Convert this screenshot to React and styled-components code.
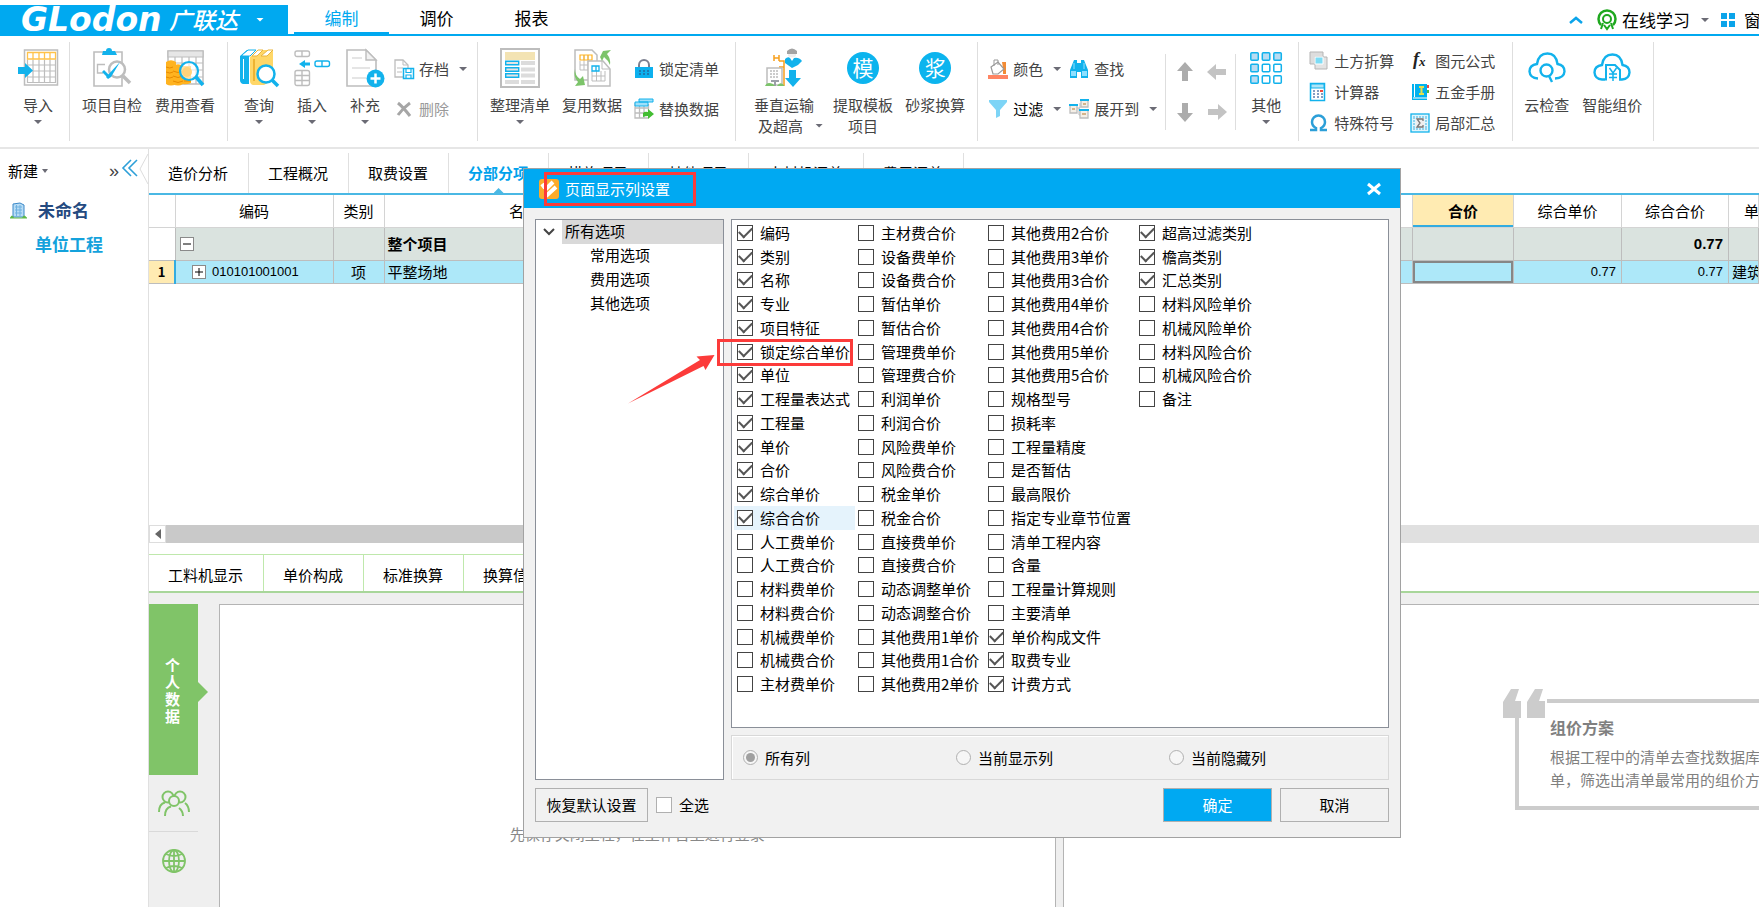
import React from 'react'

import styled, { createGlobalStyle } from 'styled-components';

const GlobalStyle = createGlobalStyle`
    * {
        box-sizing: border-box;
    }
    body {
        margin: 0;
        overflow: hidden;
        background: #fff;
        color: #000;
        font: 15px/20px 'Noto Sans CJK SC', 'Liberation Sans', sans-serif;
    }
    button, input {
        margin: 0;
        padding: 0;
        border: 0;
        background: none;
        color: inherit;
        font: inherit;
    }
    svg {
        display: block;
        flex: none;
        overflow: visible;
    }
`

const Page = styled.div`
    display: flex;
    flex-direction: column;
    height: 100vh;
    overflow: hidden;
`

/* ---------- header ---------- */

const Header = styled.header`
    display: flex;
    flex: none;
    height: 36px;
    border-bottom: 2px solid #00a9f0;
`

const Logo = styled.button`
    display: flex;
    align-items: center;
    width: 288px;
    margin: 5px 6px 0 0;
    padding-left: 21px;
    background: #00a9f0;
    color: #fff;
`

const Brand = styled.span`
    width: 148px;
    font: italic bold 33px/29px 'DejaVu Sans', sans-serif;
    text-align: left;
`

const BrandName = styled.span`
    width: 87px;
    font-size: 23px;
    font-style: italic;
    font-weight: 500;
    line-height: 29px;
    text-align: left;
`

const MenuTab = styled.button`
    width: 95px;
    padding-top: 4px;
    border-bottom: 2px solid ${({ $active }) => ($active ? '#00a9f0' : 'transparent')};
    color: ${({ $active }) => ($active ? '#00a9f0' : '#000')};
    font-size: 17px;
`

const Caret = styled.span`
    flex: none;
    width: 8px;
    height: 4px;
    background: ${({ $color }) => $color || '#6b6b75'};
    clip-path: polygon(0 0, 100% 0, 50% 100%);
`

const HeaderTools = styled.div`
    display: flex;
    align-items: center;
    width: 190px;
    margin-left: auto;
    padding-top: 6px;
    overflow: hidden;
    font-size: 17px;
    white-space: nowrap;
`

const HeaderButton = styled.button`
    display: flex;
    flex: none;
    align-items: center;
    gap: ${({ $gap }) => $gap || 5}px;
    margin-right: ${({ $after }) => $after || 0}px;

    ${Caret} {
        margin-left: 6px;
    }
`

/* ---------- ribbon ---------- */

const Ribbon = styled.nav`
    display: flex;
    flex: none;
    height: 113px;
    border-bottom: 2px solid #e6e6e6;
    color: #444;
`

const Group = styled.div`
    display: flex;
    flex: none;
    gap: ${({ $gap }) => $gap || 0}px;
    margin: 6px 0;
    padding: 0 ${({ $right }) => $right}px 0 ${({ $left }) => $left}px;
    border-right: 1px solid #dedede;
`

const BigButton = styled.button`
    display: flex;
    flex-direction: column;
    align-items: center;
    min-width: ${({ $width }) => $width || 0}px;
    padding: 6px ${({ $right }) => $right || 0}px 0 0;
    line-height: 21px;
    white-space: nowrap;
`

const IconBox = styled.span`
    display: flex;
    align-items: center;
    justify-content: center;
    height: 40px;
    margin-bottom: 6px;
`

const LabelLine = styled.span`
    display: flex;
    align-items: center;
    gap: 12px;
    width: 60px;
    padding-left: 4px;
`

const ArrowBelow = styled(Caret)`
    margin-top: 5px;
`

const Stack = styled.div`
    display: flex;
    flex-direction: column;
    padding-top: ${({ $rowHeight }) => ($rowHeight === 40 ? 7 : 3)}px;

    > button {
        height: ${({ $rowHeight }) => $rowHeight}px;
    }
`

const SmallButton = styled.button`
    display: flex;
    align-items: center;
    gap: 5px;
    color: ${({ $color }) => $color || 'inherit'};
    white-space: nowrap;

    > svg {
        width: 20px;
        height: 20px;
    }
    ${Caret} {
        margin-left: 5px;
    }
`

const MovePad = styled.div`
    display: grid;
    grid-template-columns: 32px 32px;
    grid-template-rows: 40px 40px;
    align-content: center;
    justify-content: center;
    width: 71px;
    height: 76px;
    margin-top: 12px;
    border: solid #dedede;
    border-width: 0 1px;

    button {
        display: flex;
        align-items: center;
        justify-content: center;
    }
`

const RoundGlyph = styled.span`
    width: 32px;
    height: 32px;
    border-radius: 50%;
    background: #0cb4ee;
    color: #fff;
    font-size: 21px;
    line-height: 31px;
    text-align: center;
`

/* ---------- project tree ---------- */

const Body = styled.div`
    display: flex;
    flex: 1;
    min-height: 0;
`

const Sidebar = styled.aside`
    flex: none;
    width: 149px;
    border-right: 1px solid #e0e0e0;
`

const SidebarTop = styled.div`
    display: flex;
    align-items: center;
    height: 44px;
    padding-left: 8px;
`

const NewButton = styled.button`
    display: flex;
    align-items: center;
    gap: 4px;
    width: 100px;

    ${Caret} {
        width: 6px;
    }
`

const More = styled.button`
    width: 14px;
    font: 18px/20px 'Liberation Sans', sans-serif;
    color: #444;
`

const Project = styled.a`
    display: flex;
    align-items: center;
    gap: 11px;
    height: 34px;
    padding-left: ${({ $indent }) => $indent}px;
    color: ${({ $color }) => $color};
    font-size: 17px;
    font-weight: bold;
    text-decoration: none;
`

/* ---------- work area ---------- */

const Main = styled.main`
    display: flex;
    flex: 1;
    flex-direction: column;
    min-width: 0;
`

const PageTabs = styled.div`
    display: flex;
    flex: none;
    padding-top: 4px;
    border-bottom: 2px solid #4ab8e4;
`

const PageTab = styled.button`
    position: relative;
    height: 40px;
    padding: 0 20px 0 19px;
    border-right: 1px solid #e0e0e0;
    color: ${({ $active }) => ($active ? '#00a2ec' : '#000')};
    font-weight: ${({ $active }) => ($active ? 'bold' : 'normal')};

    &::after {
        content: '';
        position: absolute;
        left: 50%;
        bottom: 0;
        display: ${({ $active }) => ($active ? 'block' : 'none')};
        width: 10px;
        height: 5px;
        margin-left: -5px;
        background: #4ab8e4;
        clip-path: polygon(50% 0, 100% 100%, 0 100%);
    }
`

const GridPane = styled.div`
    flex: none;
    height: 330px;
    overflow: hidden;
`

const Table = styled.table`
    width: 100%;
    border-collapse: collapse;
    table-layout: fixed;

    th, td {
        height: 23px;
        padding: 0;
        border: 1px solid #bdbdbd;
        border-top: 0;
        overflow: hidden;
        white-space: nowrap;
    }
    th:first-child, td:first-child {
        border-left: 0;
    }
    th {
        height: 32px;
        border-color: #d4d4d4;
        font-weight: normal;
    }
`

const PickedTh = styled.th`
    && {
        background: #ffebb2;
        box-shadow: inset 0 -2px #33ace0;
        font-weight: bold;
    }
`

const CutTh = styled.th`
    && {
        padding-left: 15px;
        text-align: left;
    }
`

const TotalRow = styled.tr`
    background: #dae3df;
    font-weight: bold;

    && td {
        height: 33px;
    }
    td:first-child {
        background: #fff;
    }
`

const ItemRow = styled.tr`
    background: #ade8f9;

    td:first-child {
        background: #ffebb2;
        border-right: 2px solid #33ace0;
        font-size: 13px;
        font-weight: bold;
        text-align: center;
    }
`

const FocusedTd = styled.td`
    box-shadow: inset 0 0 0 2px #868686;
`

const Num = styled.div`
    padding-right: 5px;
    font: ${({ $bold }) => ($bold ? 'bold 15px/20px' : '13px/20px')} 'Liberation Sans', sans-serif;
    text-align: right;
`

const CodeCell = styled.div`
    display: flex;
    align-items: center;
    gap: 6px;
    padding-left: ${({ $indent }) => $indent}px;
    font: 13px/20px 'Liberation Sans', sans-serif;
`

const Name = styled.div`
    padding-left: 3px;
`

const Toggle = styled.button`
    width: 14px;
    height: 14px;
    border: 1px solid #8a8a8a;
    background: #fff;
`

const Scrollbar = styled.div`
    display: flex;
    flex: none;
    height: 18px;
    margin-bottom: 11px;
    background: #e0e0e0;
`

const ScrollLeft = styled.button`
    display: flex;
    align-items: center;
    justify-content: center;
    width: 17px;
    border: 1px solid #ddd;
    background: #fff;
`

const Thumb = styled.span`
    width: 60%;
    background: #c9c9c9;
`

const DetailTabs = styled.div`
    display: flex;
    flex: none;
    height: 39px;
    border-bottom: 2px solid #a8d69a;
`

const DetailTab = styled.button`
    padding: 3px 20px 0 19px;
    border-top: 1px solid #bfe8ac;
    border-right: 1px solid #bfe8ac;
`

const Detail = styled.div`
    display: flex;
    flex: 1;
    min-height: 0;
    padding-top: 11px;
    background: #efefef;
`

const Sources = styled.div`
    display: flex;
    flex: none;
    flex-direction: column;
    align-items: flex-start;
    width: 70px;

    button {
        display: flex;
        align-items: center;
        justify-content: center;
        width: 49px;
        height: 57px;
        border-bottom: 1px solid #d9d9d9;
    }
    button:last-child {
        border: 0;
    }
`

const MySource = styled.button`
    && {
        position: relative;
        height: 171px;
        padding: 0 18px 0 16px;
        border: 0;
        background: #80c468;
        color: #fff;
        font-weight: bold;
        line-height: 17px;
    }
    &::after {
        content: '';
        position: absolute;
        top: 78px;
        left: 49px;
        width: 10px;
        height: 20px;
        background: #80c468;
        clip-path: polygon(0 0, 100% 50%, 0 100%);
    }
`

const Panel = styled.section`
    flex: ${({ $grow }) => $grow} ${({ $grow }) => $grow} 0;
    min-width: 0;
    margin-right: ${({ $gap }) => $gap || 0}px;
    border: solid #b4b4b4;
    border-width: 1px ${({ $gap }) => ($gap ? 1 : 0)}px 0 1px;
    background: #fff;
`

const LoginHint = styled.p`
    margin: 0;
    padding-top: 219px;
    color: #888;
    text-align: center;
`

const Quote = styled.div`
    position: relative;
    width: 244px;
    height: 111px;
    margin: 94px 0 0 auto;
    padding: 14px 0 0 31px;
    border: 4px solid #ccc;
    border-right: 0;
    color: #808080;
    line-height: 23px;
    white-space: nowrap;
`

const QuoteMark = styled.svg`
    position: absolute;
    top: -19px;
    left: -18px;
`

const QuoteTitle = styled.h3`
    margin: 0 0 8px;
    font-size: 16px;
    line-height: 20px;
`

/* ---------- dialog ---------- */

const Dialog = styled.section`
    position: absolute;
    top: 168px;
    left: 523px;
    width: 878px;
    border: 1px solid #a2a2a2;
    background: #f1f1f1;
`

const TitleBar = styled.div`
    display: flex;
    align-items: center;
    gap: 6px;
    height: 39px;
    padding: 0 19px 0 15px;
    background: #00a9f2;
    color: #fff;
`

const DialogTitle = styled.h2`
    flex: 1;
    margin: 0;
    font-size: 15px;
    font-weight: normal;
`

const Panes = styled.div`
    display: grid;
    grid-template-columns: 189px 1fr;
    gap: 7px;
    padding: 11px 11px 8px;
`

const Box = styled.div`
    border: 1px solid #8a8f98;
    background: #fff;
`

const RightPane = styled.div`
    display: flex;
    flex-direction: column;
    gap: 7px;
`

const TreeRoot = styled.div`
    display: flex;
    align-items: center;
    gap: 8px;
    height: 24px;
    padding-left: 8px;
`

const TreeItem = styled.button`
    display: block;
    flex: 1;
    height: 24px;
    padding: 0 0 2px ${({ $indent }) => $indent}px;
    background: ${({ $selected }) => ($selected ? '#d9d9d9' : 'none')};
    text-align: left;
`

const Columns = styled(Box)`
    display: grid;
    grid-auto-flow: column;
    grid-template-columns: 121px 130px 151px 1fr;
    grid-template-rows: repeat(20, 1fr);
    height: 509px;
    padding: 1px 0 31px 2px;
`

const Option = styled.label`
    display: flex;
    align-items: center;
    gap: 7px;
    padding-left: ${({ $flush }) => ($flush ? 0 : 3)}px;
    background: ${({ $hot }) => ($hot ? '#e5f3fc' : 'none')};
    white-space: nowrap;
`

const Check = styled.input`
    display: grid;
    flex: none;
    place-items: center;
    width: 16px;
    height: 16px;
    border: 1px solid ${({ $soft }) => ($soft ? '#b0b0b0' : '#444')};
    background: #fff;
    appearance: none;

    &:checked::after {
        content: '';
        width: 11px;
        height: 6px;
        margin-bottom: 4px;
        border: solid #555;
        border-width: 0 0 2px 2px;
        transform: rotate(-45deg);
    }
`

const Radios = styled.div`
    display: grid;
    grid-template-columns: 213px 213px 1fr;
    height: 45px;
    padding-left: 8px;
    border: 1px solid #d8d8d8;
    box-shadow: inset 1px 1px #fff;
`

const Radio = styled.input`
    display: grid;
    place-items: center;
    width: 15px;
    height: 15px;
    border: 1px solid #b0b0b0;
    border-radius: 50%;
    background: #f6f6f6;
    appearance: none;

    &:checked::after {
        content: '';
        width: 9px;
        height: 9px;
        border-radius: 50%;
        background: #a0a0a0;
    }
`

const Footer = styled.div`
    display: flex;
    align-items: center;
    gap: 8px;
    padding: 0 11px 15px;
`

const DialogButton = styled.button`
    width: ${({ $width }) => $width || 109}px;
    height: 34px;
    margin-left: ${({ $push }) => ($push ? 'auto' : 0)};
    border: 1px solid #b0b0b0;
    background: ${({ $primary }) => ($primary ? '#00a9f2' : '#f1f1f1')};
    color: ${({ $primary }) => ($primary ? '#fff' : '#000')};
`

const Marks = styled.svg`
    position: absolute;
    top: -1px;
    left: -1px;
    pointer-events: none;
`

/* ---------- icons ---------- */

const BLUE = '#12b2ec'
const GREY = '#bdbdbd'

const ImportIcon = () => (
    <svg width="40" height="38" viewBox="0 0 40 38" fill="none">
        <rect x="6.5" y="1" width="33" height="35" fill="#fff" stroke={GREY} strokeWidth="1.5" />
        <path d="M9.5 10.5v23h28v-23M9.5 16h28M9.5 22h28M9.5 28h28M15 10.5v23M21 10.5v23M26.5 10.5v23M32 10.5v23" stroke={GREY} strokeWidth="1.2" />
        <path d="M9.5 3.5h28v6.5h-28zM15 3.5v6.5M21 3.5v6.5M26.5 3.5v6.5M32 3.5v6.5" stroke="#ffc24a" strokeWidth="1.3" />
        <path d="M0 18h7v-4l8 7.5-8 7.5v-4H0z" fill={BLUE} />
    </svg>
)

const InspectIcon = () => (
    <svg width="38" height="38" viewBox="0 0 38 38" fill="none">
        <path d="M1 3h28v34H1z" fill="#fff" stroke={GREY} strokeWidth="1.6" />
        <path d="M10 2h3a3 3 0 0 1 6 0h3l2 4H9z" fill={BLUE} />
        <path d="M12 15.5H4.5V24H10" stroke={GREY} strokeWidth="1.4" />
        <circle cx="24" cy="20.5" r="8" stroke={GREY} strokeWidth="2.5" fill="#fff" />
        <path d="M30 27l7 7" stroke={GREY} strokeWidth="3.5" />
        <path d="M9 23l6 6 2-2-6-6z" fill={BLUE} />
        <path d="M13 28l14-15-9 15-3 2z" fill={BLUE} />
    </svg>
)

const CostIcon = () => (
    <svg width="38" height="38" viewBox="0 0 38 38" fill="none">
        <path d="M2 2h35v33H2z" fill="#fff" stroke={GREY} strokeWidth="1.5" />
        <path d="M2 2h35v6H2z" fill="#e6e6e6" stroke={GREY} strokeWidth="1.2" />
        <path d="M2 14h35M2 21h35M2 28h35M9 8v27M16 8v27M23 8v27M30 8v27" stroke={GREY} strokeWidth="1.2" />
        <path d="M0 13q5-3.500 10 0v22q-5 3-10 0z" fill="#ffb320" />
        <path d="M7 17q5-3.500 10 0h8v17q-5 2-8 1-5 3-10 0z" fill="#ffb320" />
        <path d="M0 18q4 2 7 0M0 23q4 2 7 0M0 28q4 2 7 0M7 22q5 3 10 0M7 27q5 3 10 0M7 32q5 3 10 0M18 32h7" stroke="#e88b00" strokeWidth="1" />
        <circle cx="23" cy="22" r="9" stroke={BLUE} strokeWidth="2.2" fill="#fff" fillOpacity=".6" />
        <circle cx="21" cy="23" r="5" fill="#ffd27a" />
        <path d="M30 28l7 8" stroke={BLUE} strokeWidth="3.5" />
    </svg>
)

const QueryIcon = () => (
    <svg width="39" height="38" viewBox="0 0 39 38" fill="none">
        <path d="M0 7l7-6h9L9 7v28H3q-3-1-3-4z" fill={BLUE} />
        <path d="M2 6l6-5h8l-6 6H2z" fill="#fff" stroke={BLUE} />
        <path d="M3.5 10v20" stroke="#fff" />
        <path d="M10 8l8-7h15v30l-9 5H13q-3-1-3-4z" fill="#ffd768" />
        <path d="M12 7l6-6h5l-6 6zM21 7l7-6h5l-6 6z" fill="#fff" stroke="#e9b53d" />
        <path d="M14 10v22" stroke="#e9a820" strokeWidth="1.5" />
        <circle cx="26" cy="25" r="8.5" fill="#fff" stroke={BLUE} strokeWidth="2.5" />
        <path d="M32 31l6 6" stroke={BLUE} strokeWidth="3.5" />
    </svg>
)

const InsertIcon = () => (
    <svg width="36" height="38" viewBox="0 0 36 38" fill="none" strokeWidth="1.4">
        <rect x="1" y="2" width="14.5" height="5.5" rx="2" stroke={GREY} />
        <path d="M8 2v5.5" stroke={GREY} />
        <rect x="21" y="12" width="14.5" height="5.5" rx="2" stroke={BLUE} />
        <path d="M28 12v5.5" stroke={BLUE} />
        <path d="M5 15l6-4v2.500h5v3h-5V19z" fill={BLUE} />
        <rect x="1" y="21.5" width="14.5" height="15" rx="2" stroke={GREY} />
        <path d="M8 21.5v15M1 26.5h14.5M1 31.5h14.5" stroke={GREY} />
    </svg>
)

const AppendIcon = () => (
    <svg width="38" height="38" viewBox="0 0 38 38" fill="none">
        <path d="M1 1h19l10 10v26H1z" fill="#fff" stroke={GREY} strokeWidth="1.6" />
        <path d="M20 1v10h10z" fill="#f2f2f2" stroke={GREY} strokeWidth="1.4" />
        <path d="M6 9h10M6 19h18M6 29h14" stroke="#ddd" strokeWidth="1.5" />
        <circle cx="29.5" cy="29.5" r="9" fill={BLUE} />
        <path d="M29.5 24.5v10M24.5 29.5h10" stroke="#fff" strokeWidth="2.5" />
    </svg>
)

const ArchiveIcon = () => (
    <svg viewBox="0 0 20 20" fill="none">
        <path d="M9 18H1V1h8l5 5v4" stroke={GREY} strokeWidth="1.3" />
        <path d="M9 1v5h5M3 9h6M3 13h5" stroke={GREY} />
        <rect x="9.5" y="9.5" width="10" height="10" fill="#fff" stroke={BLUE} strokeWidth="1.5" />
        <path d="M12 10v3.500h5V10M12 19v-3h5v3" stroke={BLUE} strokeWidth="1.2" />
    </svg>
)

const DeleteIcon = () => (
    <svg viewBox="0 0 20 20" fill="none">
        <path d="M4 4q5 4 12 13M16 4Q9 9 4 16" stroke="#a6a6a6" strokeWidth="3" />
    </svg>
)

const ArrangeIcon = () => (
    <svg width="40" height="40" viewBox="0 0 40 40" fill="none">
        <rect x="1" y="1" width="38" height="38" fill="#fff" stroke={GREY} strokeWidth="2" />
        <path d="M5 4h30v8H5z" fill="#f3e3b3" />
        <path d="M21 13h14v4H21zM21 19.500h14v4H21zM21 25.500h14v4H21zM21 32h14v4H21zM5 32h14v4H5z" fill="#dcdcdc" />
        <path d="M5.7 13.2h13v3.5h-13zM5.7 19.7h13v3.5h-13zM5.7 25.7h13v3.5h-13z" fill="#e4e4e4" stroke={BLUE} strokeWidth="1.4" />
    </svg>
)

const ReuseIcon = () => (
    <svg width="37" height="38" viewBox="0 0 37 38" fill="none">
        <path d="M1 1h17l5 5v25H1z" fill="#fff" stroke={GREY} strokeWidth="1.5" />
        <path d="M6 12v9h12M10 6v15M14 6v15M6 16h12" stroke={GREY} />
        <path d="M6 6h12v5H6zM10 6v5M14 6v5" stroke="#ffb320" strokeWidth="1.2" />
        <path d="M14 12h15l7 8v17H14z" fill="#fff" stroke={GREY} strokeWidth="1.5" />
        <path d="M28 12v8h8M18 22v10h13V22M22.5 22v10M27 22v10M18 27h13" stroke={GREY} />
        <path d="M18 17h7v5h-7zM22 17v5" stroke={BLUE} strokeWidth="1.3" />
        <path d="M26 8l3-6 8-1-4 4q4 5 3 11-2-5-6-8l-2 4z" fill="#7cc46a" />
        <path d="M1 20q0 7 5 10l3-3 2 9-10 1 3-4q-5-5-3-13z" fill="#7cc46a" />
    </svg>
)

const LockIcon = () => (
    <svg viewBox="0 0 20 20" fill="none">
        <path d="M5 9V6a5 5 0 0 1 10 0v3" stroke="#7d8090" strokeWidth="2" />
        <path d="M1 8h18v11H1z" fill="#0cb0ee" />
        <path d="M5 12h2m2 0h2m2 0h2M5 15h2m2 0h2m2 0h2" stroke="#23699e" strokeWidth="1.5" />
    </svg>
)

const ReplaceIcon = () => (
    <svg viewBox="0 0 20 20" fill="none">
        <path d="M1 4v15h13M1 9h14M1 14h12M5.5 5v14M10 5v14M14.5 5v7" stroke={GREY} strokeWidth="1.3" />
        <path d="M1 3h13v4H1zM5 0h14v3H5z" fill="#9fe0fa" stroke={BLUE} />
        <path d="M9 14q2-2 5-1v-3l6 5-6 5v-3q-3 0-5 1z" fill="#43bd32" />
    </svg>
)

const TransportIcon = () => (
    <svg width="38" height="38" viewBox="0 0 38 38" fill="none">
        <path d="M9 6v6M14 6v6M9 9h5M14 12h5v25M14 18h5" stroke="#f8a01c" strokeWidth="1.5" />
        <path d="M2 19h15v17H2z" fill="#fff" stroke={GREY} strokeWidth="1.5" />
        <path d="M5 22h9M5 25h9M5 28h9" stroke="#ccc" strokeDasharray="2 1" strokeWidth="2" />
        <path d="M6 31h8v2h-3v4H9v-4H6z" fill="#9b9fa8" />
        <path d="M0 37q2-5 8-2l2 2zM12 37q3-5 7-1v1z" fill="#7cc46a" />
        <path d="M22 2q5-5 10 0v3H22z" fill="#a3a3a3" />
        <path d="M23 5h8v2q-4 3-8 0z" fill="#eee" />
        <path d="M20 10q3-3 5-1l2 3 2-3q5-1 8 3l-4 4-6 3-7-5z" fill={BLUE} />
        <path d="M24 21h7v8h5l-8 9-8-9h4z" fill={BLUE} />
    </svg>
)

const ColorIcon = () => (
    <svg viewBox="0 0 20 20" fill="none">
        <path d="M14 3h4v12h-3V9z" fill="#f28b35" />
        <path d="M3 8l7-5 6 7-6 5H5z" fill="#fff" stroke="#999" strokeWidth="1.2" />
        <path d="M6 7V1h4v5" stroke="#999" />
        <path d="M0 16h20v4H0z" fill="#ff8563" />
    </svg>
)

const FilterIcon = () => (
    <svg viewBox="0 0 20 20">
        <path d="M1 1h18v2l-7 8v6l-4 2v-8L1 3z" fill="#7dd4f6" />
    </svg>
)

const FindIcon = () => (
    <svg viewBox="0 0 20 20">
        <path d="M5 1h3v3h4V1h3l4 10v8h-7v-6H8v6H1v-8z" fill={BLUE} />
        <path d="M2 12h5v5H2zM13 12h5v5h-5z" fill="#8fe0ff" />
        <path d="M5 4v6M15 4v6" stroke="#8fe0ff" />
    </svg>
)

const ExpandIcon = () => (
    <svg viewBox="0 0 20 20" fill="none">
        <path d="M8 9h3V4M10 9v7h2" stroke={GREY} />
        <path d="M1 6h7v8H1zM12 1h7v7h-7zM11 11h8v8h-8z" fill="#f5efe6" stroke={GREY} strokeWidth="1.3" />
        <path d="M0 6h9M11 1h9M10 11h10" stroke={BLUE} strokeWidth="2" />
        <path d="M3 10h3M14 5h3M13 15h4" stroke="#d4b48a" strokeWidth="2" />
    </svg>
)

const MoveIcon = ({ angle, fill }) => (
    <svg width="20" height="20" viewBox="0 0 20 20">
        <path d="M10 0l8 9h-5v10H7V9H2z" fill={fill} transform={`rotate(${angle} 10 10)`} />
    </svg>
)

const OthersIcon = () => (
    <svg width="32" height="32" viewBox="0 0 32 32" strokeWidth="1.5" stroke={BLUE}>
        {[0, 1, 2].map(row => [0, 1, 2].map(col => (
            <rect
                key={`${row}${col}`}
                x={col * 11.5 + 0.8}
                y={row * 11.5 + 0.8}
                width="7.5"
                height="7.5"
                rx="1"
                fill={row === 0 || col === 0 ? '#b9dcf2' : '#fff'}
            />
        )))}
    </svg>
)

const EarthIcon = () => (
    <svg viewBox="0 0 20 20" fill="none">
        <path d="M1 1h13v12H1z" fill="#ddd" stroke="#b5b5b5" />
        <path d="M6 6h12v12H6z" fill="#e3e3e3" stroke="#b5b5b5" />
        <path d="M6 6h8v7H6z" fill="#7ddcf5" stroke="#fff" />
    </svg>
)

const CalcIcon = () => (
    <svg viewBox="0 0 20 20" fill="none">
        <path d="M1.5 1.5h14v17h-14z" fill="#fff" stroke={BLUE} strokeWidth="1.5" />
        <path d="M2 2h13v4H2z" fill="#aee5f8" stroke={BLUE} />
        <path d="M4 9h2m2 0h2M4 12h2m2 0h2m2 0h2M4 15h2m2 0h2m2 0h2" stroke="#5b7fb0" strokeWidth="1.5" />
        <path d="M11 9h3" stroke="#f04b3e" strokeWidth="2" />
    </svg>
)

const OmegaIcon = () => (
    <svg viewBox="0 0 20 20" fill="none">
        <path d="M1 17h6v-2q-4-2-4-6a6.5 6.5 0 0 1 13 0q0 4-4 6v2h6" stroke="#2c9fd8" strokeWidth="2.5" />
    </svg>
)

const FormulaIcon = () => (
    <svg viewBox="0 0 20 20" fill="#222">
        <text x="3" y="14" fontFamily="Liberation Serif, serif" fontSize="18" fontWeight="bold" fontStyle="italic">f</text>
        <text x="9" y="15" fontFamily="Liberation Serif, serif" fontSize="13" fontWeight="bold" fontStyle="italic">x</text>
    </svg>
)

const HandbookIcon = () => (
    <svg viewBox="0 0 20 20" fill="none">
        <path d="M2 2h15v16H2z" fill="#00b1ee" />
        <path d="M4.5 2v13M3 16h14" stroke="#fff" />
        <path d="M9 5h5M9 12h5M11.5 5v7" stroke="#e4e04c" strokeWidth="2" />
        <path d="M17 3h2v3h-2z" fill="#e8484a" />
        <path d="M17 8h2v3h-2z" fill="#54b948" />
    </svg>
)

const SumIcon = () => (
    <svg viewBox="0 0 20 20" fill="none">
        <rect x="1" y="1" width="18" height="18" fill="#e2f5fc" stroke={BLUE} strokeWidth="1.3" />
        <path d="M3 4h14M3 16h14M4 4v12M16 4v12" stroke="#8fd3ee" strokeDasharray="2 1" strokeWidth="2" />
        <path d="M6 5h8v10H6z" fill="#eee" />
        <path d="M13 8V6H7l3 4-3 4h6v-2" stroke="#777" strokeWidth="1.3" />
    </svg>
)

const CloudCheckIcon = () => (
    <svg width="38" height="32" viewBox="0 0 38 32" fill="none" stroke={BLUE} strokeWidth="2.4">
        <path d="M10 26.5Q2 26 1.500 19.500 1.500 13 9 12C10 5 14 1.500 19.500 1.500S28.500 5 29.500 12Q36.500 13 36.500 19.500 36 26 27 26.500" />
        <circle cx="18.5" cy="18.5" r="6" />
        <path d="M21 24l3 6" />
    </svg>
)

const CloudPriceIcon = () => (
    <svg width="38" height="32" viewBox="0 0 38 32" fill="none" stroke={BLUE} strokeWidth="2.4">
        <path d="M12 27.5H9Q2 27 1.500 20.500 1.500 14 9 13C10 6 14 2.500 19.500 2.500S28.500 6 29.500 13Q36.500 14 36.500 20.500 36 27 29 27.500H26" />
        <path d="M13 28.500V13h9l5 5v10" strokeWidth="2" />
        <path d="M16.5 16l3.5 5 3.5-5M20 21v8M16 22h8M16 25.5h8" strokeWidth="1.5" />
    </svg>
)

const ServiceIcon = () => (
    <svg width="20" height="20" viewBox="0 0 20 20" fill="none" stroke="#1fa81f">
        <path d="M4 15A8.5 8.5 0 1 1 16 15" strokeWidth="2.5" />
        <circle cx="10" cy="9" r="4" strokeWidth="2" />
        <path d="M6 13l-2 6M14 13l2 6M7 15l3 4 3-4" strokeWidth="2" />
    </svg>
)

const WindowsIcon = () => (
    <svg width="14" height="14" viewBox="0 0 14 14">
        <path d="M0 0h6v6H0zM8 0h6v6H8zM0 8h6v6H0zM8 8h6v6H8z" fill="#0ba4ea" />
    </svg>
)

const BuildingIcon = () => (
    <svg width="17" height="17" viewBox="0 0 17 17" fill="none">
        <path d="M3 2l7-1 4 2v12H3z" fill="#b7dcf5" stroke="#3b88c8" />
        <path d="M5 5h7M5 8h7M5 11h7M6.5 3v11M10 3v11" stroke="#6fb1e0" />
        <path d="M0 16q2-5 4 0zM12 16q2-5 5 0z" fill="#5fb848" />
        <path d="M0 16h17" stroke="#5fb848" />
    </svg>
)

const PeopleIcon = () => (
    <svg width="32" height="26" viewBox="0 0 32 26" fill="none" stroke="#80c468" strokeWidth="2">
        <circle cx="10" cy="7" r="5.5" />
        <circle cx="22" cy="7" r="5.5" />
        <circle cx="16" cy="11" r="5" fill="#efefef" />
        <path d="M1 22q0-8 6-9.500M7 26q0-8 6-9.500M21 18q4 3 4 8M27 13q4 3 4 9" />
    </svg>
)

const GlobeIcon = () => (
    <svg width="24" height="24" viewBox="0 0 24 24" fill="none" stroke="#80c468" strokeWidth="1.8">
        <circle cx="12" cy="12" r="11" />
        <ellipse cx="12" cy="12" rx="5" ry="11" />
        <path d="M12 1v22M1 12h22M4 5q8 4 16 0M4 19q8-4 16 0" />
    </svg>
)

const AppIcon = () => (
    <svg width="20" height="20" viewBox="0 0 20 20" fill="none">
        <rect width="20" height="20" rx="3" fill="#fbab2c" />
        <path d="M3 5l3 4M6 11l8-8M7 17l10-9" stroke="#fff" strokeWidth="4" />
    </svg>
)

/* ---------- data ---------- */

const PAGE_TABS = ['造价分析', '工程概况', '取费设置', '分部分项', '措施项目', '其他项目', '人材机汇总', '费用汇总']
const DETAIL_TABS = ['工料机显示', '单价构成', '标准换算', '换算信息']

const OPTIONS = [
    '编码', '类别', '名称', '专业', '项目特征', '锁定综合单价', '单位', '工程量表达式', '工程量', '单价',
    '合价', '综合单价', '综合合价', '人工费单价', '人工费合价', '材料费单价', '材料费合价', '机械费单价', '机械费合价', '主材费单价',
    '主材费合价', '设备费单价', '设备费合价', '暂估单价', '暂估合价', '管理费单价', '管理费合价', '利润单价', '利润合价', '风险费单价',
    '风险费合价', '税金单价', '税金合价', '直接费单价', '直接费合价', '动态调整单价', '动态调整合价', '其他费用1单价', '其他费用1合价', '其他费用2单价',
    '其他费用2合价', '其他费用3单价', '其他费用3合价', '其他费用4单价', '其他费用4合价', '其他费用5单价', '其他费用5合价', '规格型号', '损耗率', '工程量精度',
    '是否暂估', '最高限价', '指定专业章节位置', '清单工程内容', '含量', '工程量计算规则', '主要清单', '单价构成文件', '取费专业', '计费方式',
    '超高过滤类别', '檐高类别', '汇总类别', '材料风险单价', '机械风险单价', '材料风险合价', '机械风险合价', '备注',
]

const isShown = index => index < 13 || (index > 56 && index < 63)

/* ---------- parts ---------- */

const Big = ({ icon, label, width, arrow }) => (
    <BigButton $width={width}>
        <IconBox>{icon}</IconBox>
        {label}
        {arrow && <ArrowBelow />}
    </BigButton>
)

const Small = ({ icon, label, arrow, color }) => (
    <SmallButton $color={color}>
        {icon}
        {label}
        {arrow && <Caret />}
    </SmallButton>
)

const TopBar = () => (
    <Header>
        <Logo>
            <Brand>GLodon</Brand>
            <BrandName>广联达</BrandName>
            <Caret $color="#fff" />
        </Logo>
        <MenuTab $active>编制</MenuTab>
        <MenuTab>调价</MenuTab>
        <MenuTab>报表</MenuTab>
        <HeaderTools>
            <HeaderButton $after={14} aria-label="收起">
                <svg width="14" height="8" viewBox="0 0 14 8" fill="none">
                    <path d="M1 7l6-5 6 5" stroke="#0ba4ea" strokeWidth="2.5" />
                </svg>
            </HeaderButton>
            <HeaderButton $after={12}>
                <ServiceIcon />
                在线学习
                <Caret />
            </HeaderButton>
            <HeaderButton $gap={9}>
                <WindowsIcon />
                窗口
            </HeaderButton>
        </HeaderTools>
    </Header>
)

const Toolbar = () => (
    <Ribbon>
        <Group $left={8} $right={1}>
            <Big icon={<ImportIcon />} label="导入" width={60} arrow />
        </Group>
        <Group $left={12} $right={12} $gap={13}>
            <Big icon={<InspectIcon />} label="项目自检" />
            <Big icon={<CostIcon />} label="费用查看" />
        </Group>
        <Group $left={7} $right={10} $gap={5}>
            <Big icon={<QueryIcon />} label="查询" width={48} arrow />
            <Big icon={<InsertIcon />} label="插入" width={48} arrow />
            <Big icon={<AppendIcon />} label="补充" width={48} arrow />
            <Stack $rowHeight={40}>
                <Small icon={<ArchiveIcon />} label="存档" arrow />
                <Small icon={<DeleteIcon />} label="删除" color="#999" />
            </Stack>
        </Group>
        <Group $left={12} $right={16} $gap={12}>
            <Big icon={<ArrangeIcon />} label="整理清单" arrow />
            <Big icon={<ReuseIcon />} label="复用数据" />
            <Stack $rowHeight={40}>
                <Small icon={<LockIcon />} label="锁定清单" />
                <Small icon={<ReplaceIcon />} label="替换数据" />
            </Stack>
        </Group>
        <Group $left={18} $right={12} $gap={12}>
            <BigButton $right={7}>
                <IconBox><TransportIcon /></IconBox>
                垂直运输
                <LabelLine>及超高<Caret /></LabelLine>
            </BigButton>
            <Big icon={<RoundGlyph>模</RoundGlyph>} label={<>提取模板<br />项目</>} />
            <Big icon={<RoundGlyph>浆</RoundGlyph>} label="砂浆换算" />
        </Group>
        <Group $left={10} $right={10} $gap={8}>
            <Stack $rowHeight={40}>
                <Small icon={<ColorIcon />} label="颜色" arrow />
                <Small icon={<FilterIcon />} label="过滤" color="#000" arrow />
            </Stack>
            <Stack $rowHeight={40}>
                <Small icon={<FindIcon />} label="查找" />
                <Small icon={<ExpandIcon />} label="展开到" arrow />
            </Stack>
            <MovePad>
                <button aria-label="上移"><MoveIcon angle={0} fill="#acacac" /></button>
                <button aria-label="升级"><MoveIcon angle={270} fill="#c3c3c3" /></button>
                <button aria-label="下移"><MoveIcon angle={180} fill="#acacac" /></button>
                <button aria-label="降级"><MoveIcon angle={90} fill="#c3c3c3" /></button>
            </MovePad>
            <Big icon={<OthersIcon />} label="其他" width={44} arrow />
        </Group>
        <Group $left={10} $right={17} $gap={16}>
            <Stack $rowHeight={31}>
                <Small icon={<EarthIcon />} label="土方折算" />
                <Small icon={<CalcIcon />} label="计算器" />
                <Small icon={<OmegaIcon />} label="特殊符号" />
            </Stack>
            <Stack $rowHeight={31}>
                <Small icon={<FormulaIcon />} label="图元公式" />
                <Small icon={<HandbookIcon />} label="五金手册" />
                <Small icon={<SumIcon />} label="局部汇总" />
            </Stack>
        </Group>
        <Group $left={11} $right={11} $gap={13}>
            <Big icon={<CloudCheckIcon />} label="云检查" />
            <Big icon={<CloudPriceIcon />} label="智能组价" />
        </Group>
    </Ribbon>
)

const ProjectTree = () => (
    <Sidebar>
        <SidebarTop>
            <NewButton>新建<Caret /></NewButton>
            <More>»</More>
            <svg width="27" height="40" viewBox="0 0 27 40" fill="none">
                <path d="M10 9l-8 8 8 8M16 9l-8 8 8 8" stroke="#2d9fd8" strokeWidth="1.6" />
                <path d="M27 3l-8 15 8 15" fill="#fff" stroke="#ddd" />
            </svg>
        </SidebarTop>
        <Project href="#project" $indent={10} $color="#244a80">
            <BuildingIcon />
            未命名
        </Project>
        <Project href="#unit" $indent={35} $color="#14a2dc">单位工程</Project>
    </Sidebar>
)

const BillTable = () => (
    <Table>
        <colgroup>
            <col width="26" />
            <col width="158" />
            <col width="51" />
            <col width="280" />
            <col />
            <col width="101" />
            <col width="108" />
            <col width="107" />
            <col width="30" />
        </colgroup>
        <thead>
            <tr>
                <th></th>
                <th>编码</th>
                <th>类别</th>
                <th>名称</th>
                <th></th>
                <PickedTh>合价</PickedTh>
                <th>综合单价</th>
                <th>综合合价</th>
                <CutTh>单价构成文件</CutTh>
            </tr>
        </thead>
        <tbody>
            <TotalRow>
                <td></td>
                <td>
                    <CodeCell $indent={4}>
                        <Toggle aria-label="折叠">
                            <svg width="12" height="12"><path d="M2 6h8" stroke="#000" /></svg>
                        </Toggle>
                    </CodeCell>
                </td>
                <td></td>
                <td><Name>整个项目</Name></td>
                <td></td>
                <td></td>
                <td></td>
                <td><Num $bold>0.77</Num></td>
                <td></td>
            </TotalRow>
            <ItemRow>
                <td>1</td>
                <td>
                    <CodeCell $indent={16}>
                        <Toggle aria-label="展开">
                            <svg width="12" height="12"><path d="M2 6h8M6 2v8" stroke="#000" /></svg>
                        </Toggle>
                        010101001001
                    </CodeCell>
                </td>
                <td align="center">项</td>
                <td><Name>平整场地</Name></td>
                <td></td>
                <FocusedTd />
                <td><Num>0.77</Num></td>
                <td><Num>0.77</Num></td>
                <td><Name>建筑工程</Name></td>
            </ItemRow>
        </tbody>
    </Table>
)

const ColumnDialog = () => (
    <Dialog role="dialog" aria-labelledby="dialog-title">
        <TitleBar>
            <AppIcon />
            <DialogTitle id="dialog-title">页面显示列设置</DialogTitle>
            <button aria-label="关闭">
                <svg width="14" height="12" viewBox="0 0 14 12">
                    <path d="M1 1l12 10M13 1L1 11" stroke="#fff" strokeWidth="3" />
                </svg>
            </button>
        </TitleBar>
        <Panes>
            <Box>
                <TreeRoot>
                    <svg width="10" height="6" viewBox="0 0 10 6" fill="none">
                        <path d="M0 0l5 5 5-5" stroke="#444" strokeWidth="2" />
                    </svg>
                    <TreeItem $indent={3} $selected>所有选项</TreeItem>
                </TreeRoot>
                <TreeItem $indent={54}>常用选项</TreeItem>
                <TreeItem $indent={54}>费用选项</TreeItem>
                <TreeItem $indent={54}>其他选项</TreeItem>
            </Box>
            <RightPane>
                <Columns>
                    {OPTIONS.map((name, index) => (
                        <Option key={name} $hot={name === '综合合价'}>
                            <Check type="checkbox" defaultChecked={isShown(index)} />
                            {name}
                        </Option>
                    ))}
                </Columns>
                <Radios>
                    {['所有列', '当前显示列', '当前隐藏列'].map((name, index) => (
                        <Option key={name}>
                            <Radio type="radio" name="scope" defaultChecked={index === 0} />
                            {name}
                        </Option>
                    ))}
                </Radios>
            </RightPane>
        </Panes>
        <Footer>
            <DialogButton $width={113}>恢复默认设置</DialogButton>
            <Option $flush>
                <Check type="checkbox" $soft />
                全选
            </Option>
            <DialogButton $primary $push>确定</DialogButton>
            <DialogButton>取消</DialogButton>
        </Footer>
        <Marks width="878" height="670" viewBox="0 0 878 670" fill="none">
            <path d="M22.5 5.5h149v31h-149zM195.5 172.5h133v24h-133z" stroke="#fc3b3a" strokeWidth="3" />
            <path d="M105 235.500L177 192l-3.500-3.500L191.500 187 182.500 202l-2-4z" fill="#fc3b3a" />
        </Marks>
    </Dialog>
)

const App = () => (
    <Page>
        <GlobalStyle />
        <TopBar />
        <Toolbar />
        <Body>
            <ProjectTree />
            <Main>
                <PageTabs>
                    {PAGE_TABS.map(name => (
                        <PageTab key={name} $active={name === '分部分项'}>{name}</PageTab>
                    ))}
                </PageTabs>
                <GridPane>
                    <BillTable />
                </GridPane>
                <Scrollbar>
                    <ScrollLeft aria-label="向左">
                        <svg width="6" height="10"><path d="M6 0v10L0 5z" fill="#666" /></svg>
                    </ScrollLeft>
                    <Thumb />
                </Scrollbar>
                <DetailTabs>
                    {DETAIL_TABS.map(name => <DetailTab key={name}>{name}</DetailTab>)}
                </DetailTabs>
                <Detail>
                    <Sources>
                        <MySource>个人数据</MySource>
                        <button aria-label="企业数据"><PeopleIcon /></button>
                        <button aria-label="行业数据"><GlobeIcon /></button>
                    </Sources>
                    <Panel $grow={6} $gap={7}>
                        <LoginHint>先保存关闭工程，在工作台上进行登录</LoginHint>
                    </Panel>
                    <Panel $grow={5}>
                        <Quote>
                            <QuoteMark width="44" height="34" viewBox="0 0 44 34">
                                <path d="M0 0h46v34H0z" fill="#fff" />
                                <path d="M2 34V18L10 5h8l-4 12h6v17zM26 34V18l8-13h8l-4 12h6v17z" fill="#ccc" />
                            </QuoteMark>
                            <QuoteTitle>组价方案</QuoteTitle>
                            根据工程中的清单去查找数据库<br />
                            单，筛选出清单最常用的组价方
                        </Quote>
                    </Panel>
                </Detail>
            </Main>
        </Body>
        <ColumnDialog />
    </Page>
)

export default App
